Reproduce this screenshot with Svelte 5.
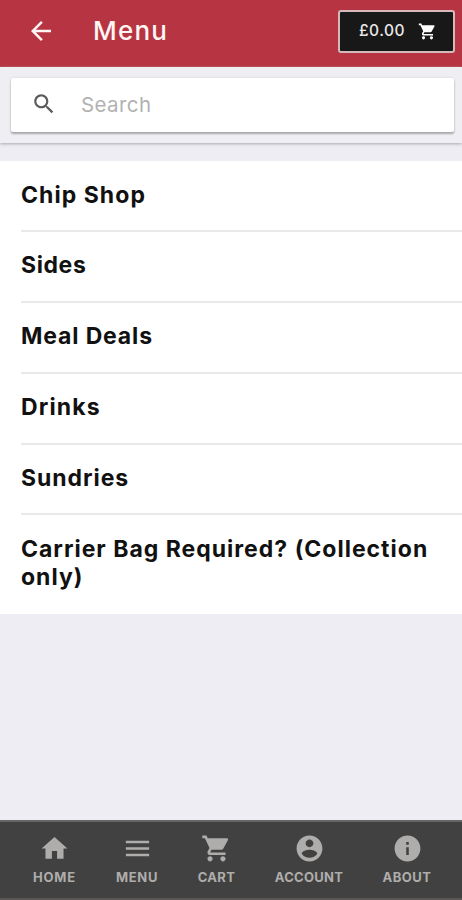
<script>
  const categories = [
    { name: 'Chip Shop', spacing: 1.05 },
    { name: 'Sides', spacing: 0.6 },
    { name: 'Meal Deals', spacing: 0.85 },
    { name: 'Drinks', spacing: 1.15 },
    { name: 'Sundries', spacing: 0.95 },
    { name: 'Carrier Bag Required? (Collection only)', spacing: 1 }
  ]

  const cartPath = 'M7 18c-1.1 0-1.99.9-1.99 2S5.9 22 7 22s2-.9 2-2-.9-2-2-2zM1 2v2h2l3.6 7.59-1.35 2.45c-.16.28-.25.61-.25.96 0 1.1.9 2 2 2h12v-2H7.42c-.14 0-.25-.11-.25-.25l.03-.12.9-1.63h7.45c.75 0 1.41-.41 1.75-1.03l3.58-6.49c.08-.14.12-.31.12-.48 0-.55-.45-1-1-1H5.21l-.94-2H1zm16 16c-1.1 0-1.99.9-1.99 2s.89 2 1.99 2 2-.9 2-2-.9-2-2-2z'

  const tabs = [
    { label: 'HOME', width: 83, spacing: 0.8, path: 'M10 20v-6h4v6h5v-8h3L12 3 2 12h3v8z' },
    { label: 'MENU', width: 82, spacing: 0.7, path: 'M3 18h18v-2H3v2zm0-5h18v-2H3v2zm0-7v2h18V6H3z' },
    { label: 'CART', width: 77, spacing: 0.3, path: cartPath },
    { label: 'ACCOUNT', width: 108, spacing: 0.3, path: 'M12 2C6.48 2 2 6.48 2 12s4.48 10 10 10 10-4.48 10-10S17.52 2 12 2zm0 3c1.66 0 3 1.34 3 3s-1.34 3-3 3-3-1.34-3-3 1.34-3 3-3zm0 14.2c-2.5 0-4.71-1.28-6-3.22.03-1.99 4-3.08 6-3.08 1.99 0 5.97 1.09 6 3.08-1.29 1.94-3.5 3.22-6 3.22z' },
    { label: 'ABOUT', width: 88, spacing: 0.5, path: 'M12 2C6.48 2 2 6.48 2 12s4.48 10 10 10 10-4.48 10-10S17.52 2 12 2zm1 15h-2v-6h2v6zm0-8h-2V7h2v2z' }
  ]
</script>

<div class="app">
  <header>
    <button class="back" aria-label="Back">
      <svg viewBox="0 0 24 24"><path d="M20 11H7.83l5.59-5.59L12 4l-8 8 8 8 1.41-1.41L7.83 13H20v-2z" /></svg>
    </button>
    <h1>Menu</h1>
    <button class="basket">
      <span>£0.00</span>
      <svg viewBox="0 0 24 24"><path d={cartPath} /></svg>
    </button>
  </header>

  <div class="search">
    <label>
      <svg viewBox="0 0 24 24"><path d="M15.5 14h-.79l-.28-.27C15.41 12.59 16 11.11 16 9.5 16 5.91 13.09 3 9.5 3S3 5.91 3 9.5 5.91 16 9.5 16c1.61 0 3.09-.59 4.23-1.57l.27.28v.79l5 4.99L20.49 19l-4.99-5zm-6 0C7.01 14 5 11.99 5 9.5S7.01 5 9.5 5 14 7.01 14 9.5 11.99 14 9.5 14z" /></svg>
      <input type="text" placeholder="Search">
    </label>
  </div>

  <main>
    <ul>
      {#each categories as category}
        <li><h2 style:letter-spacing="{category.spacing}px">{category.name}</h2></li>
      {/each}
    </ul>
  </main>

  <nav>
    {#each tabs as tab}
      <button class="tab" style:width="{tab.width}px">
        <svg viewBox="0 0 24 24"><path d={tab.path} /></svg>
        <span style:letter-spacing="{tab.spacing}px">{tab.label}</span>
      </button>
    {/each}
  </nav>
</div>

<style>
  :global(body) {
    margin: 0;
  }
  .app {
    display: flex;
    flex-direction: column;
    height: 900px;
    overflow: hidden;
    background: #eeedf3;
    font-family: Inter, 'Open Sans', sans-serif;
  }
  svg {
    display: block;
    fill: currentColor;
  }
  button {
    border: 0;
    padding: 0;
    background: none;
    font: inherit;
    color: inherit;
  }
  header {
    display: flex;
    align-items: center;
    box-sizing: border-box;
    height: 67px;
    padding: 0 7px 5px 26px;
    background: #b73542;
    color: #fff5f3;
  }
  .back svg {
    width: 30px;
    height: 30px;
  }
  h1 {
    flex: 1;
    margin: 0 0 1px 37px;
    font-size: 26px;
    font-weight: 500;
    letter-spacing: 1.2px;
  }
  .basket {
    display: flex;
    align-items: center;
    justify-content: space-between;
    box-sizing: border-box;
    width: 117px;
    height: 43px;
    margin-top: 1px;
    padding: 0 16px 2px 19px;
    border: 2px solid #d5b9bb;
    border-radius: 3px;
    background: #191819;
    color: #e9e7e7;
    font-size: 15.5px;
    font-weight: 500;
    letter-spacing: 0.5px;
  }
  .basket svg {
    width: 19px;
    height: 19px;
    margin-top: 1px;
    color: #fff;
  }
  .search {
    box-sizing: border-box;
    height: 76px;
    padding: 11px 8px 0 11px;
    background: #efeff3;
    box-shadow: 0 1px 3px #a9a9b0;
  }
  label {
    display: flex;
    align-items: center;
    box-sizing: border-box;
    height: 54px;
    padding: 0 0 2px 20px;
    border-radius: 2px;
    background: #fff;
    box-shadow: 0 2px 2px #a9a9ad, 0 0 3px #d5d5d9;
  }
  label svg {
    width: 26px;
    height: 26px;
    color: #5b5b5b;
  }
  input {
    flex: 1;
    min-width: 0;
    margin-left: 24px;
    padding: 0;
    border: 0;
    outline: 0;
    background: none;
    font: 400 20.5px Inter, sans-serif;
    letter-spacing: 0.4px;
  }
  input::placeholder {
    color: #b2b2b2;
  }
  main {
    flex: 1;
    padding-top: 18px;
  }
  ul {
    margin: 0;
    padding: 0 0 0 21px;
    list-style: none;
    background: #fff;
  }
  li {
    box-sizing: border-box;
    min-height: 70.9px;
    padding: 19.5px 20px 20px 0;
    border-bottom: 2px solid #e9e9e9;
  }
  li:last-child {
    height: 98.5px;
    border: 0;
  }
  h2 {
    margin: 0;
    color: #111;
    font-size: 23px;
    font-weight: 650;
    line-height: 28.5px;
  }
  nav {
    display: flex;
    box-sizing: border-box;
    height: 80px;
    padding: 0 11px 0 13px;
    border-top: 2px solid #666;
    border-bottom: 2px solid #5c5757;
    background: #414141;
    color: #afadab;
  }
  .tab {
    display: flex;
    flex: none;
    flex-direction: column;
    align-items: center;
    padding-top: 11px;
    font-size: 13px;
    font-weight: 700;
    line-height: 16px;
  }
  .tab svg {
    width: 31px;
    height: 31px;
    margin-bottom: 5px;
  }
</style>
